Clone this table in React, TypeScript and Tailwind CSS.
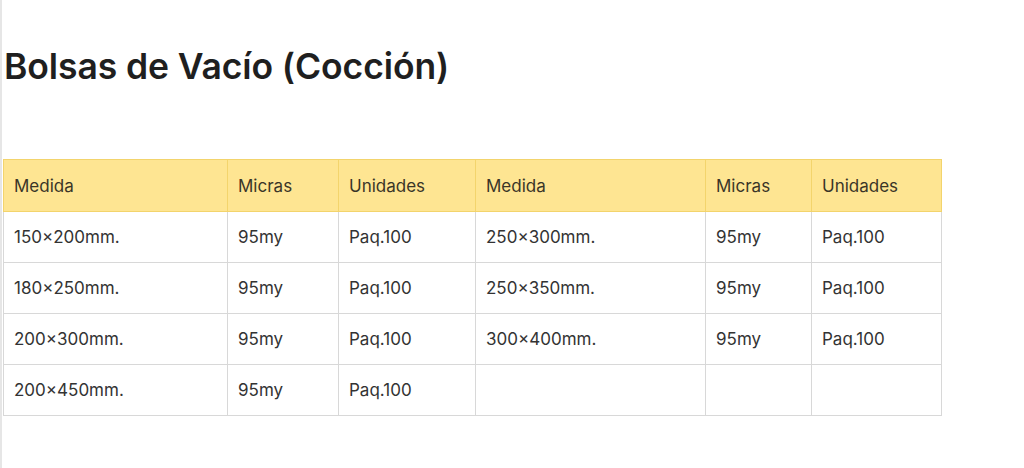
const left = [
  ["150×200mm.", "95my", "Paq.100"],
  ["180×250mm.", "95my", "Paq.100"],
  ["200×300mm.", "95my", "Paq.100"],
  ["200×450mm.", "95my", "Paq.100"],
];

const right = [
  ["250×300mm.", "95my", "Paq.100"],
  ["250×350mm.", "95my", "Paq.100"],
  ["300×400mm.", "95my", "Paq.100"],
  ["", "", ""],
];

const widths = ["w-[224px]", "w-[111px]", "w-[137px]", "w-[230px]", "w-[106px]", "w-[130px]"];
const headers = ["Medida", "Micras", "Unidades", "Medida", "Micras", "Unidades"];

export default function App() {
  return (
    <div className="min-h-[468px] border-l-2 border-[#e6e6e6] bg-white font-['Inter',sans-serif] text-[#333]">
      <div className="pl-[1px] pt-[49px]">
        <h1 className="pl-[1px] text-[35.5px] leading-[36px] font-semibold tracking-[-0.1px] text-[#1f1f1f]">
          Bolsas de Vacío (Cocción)
        </h1>
        <table className="mt-[74px] table-fixed border-collapse text-[17px]">
          <colgroup>
            {widths.map((w, i) => (
              <col key={i} className={w} />
            ))}
          </colgroup>
          <thead>
            <tr className="h-[52px] bg-[#fee592]">
              {headers.map((h, i) => (
                <th key={i} className="border border-[#f3d46c] px-[10px] pt-[2px] text-left font-normal text-[#3a3528]">
                  {h}
                </th>
              ))}
            </tr>
          </thead>
          <tbody>
            {left.map((row, r) => (
              <tr key={r} className="h-[51px]">
                {[...row, ...right[r]].map((c, i) => (
                  <td key={i} className="border border-[#d8d8d8] px-[10px] pt-[2px] text-[#333]">
                    {c}
                  </td>
                ))}
              </tr>
            ))}
          </tbody>
        </table>
      </div>
    </div>
  );
}
